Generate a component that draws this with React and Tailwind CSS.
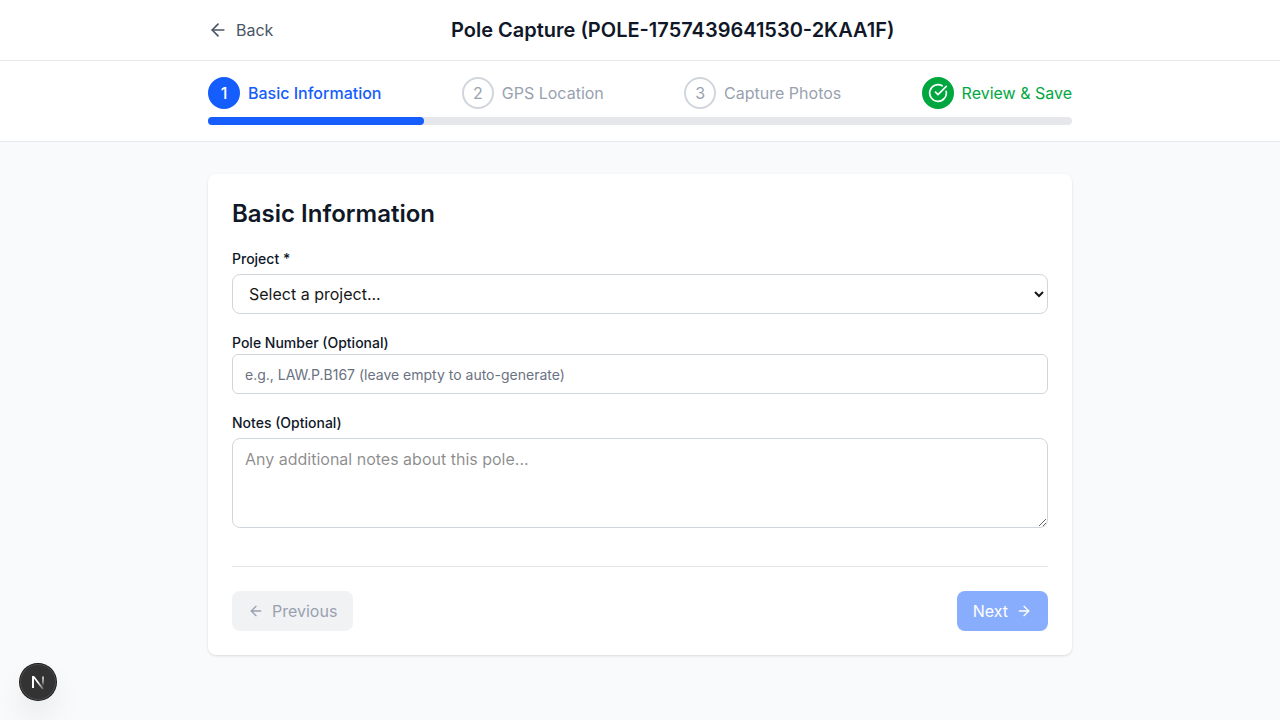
import { ArrowLeft, ArrowRight, CircleCheckBig } from "lucide-react";

const steps = [
  { label: "Basic Information", state: "current" },
  { label: "GPS Location", state: "upcoming" },
  { label: "Capture Photos", state: "upcoming" },
  { label: "Review & Save", state: "complete" },
];

const stepText = {
  current: "font-medium text-blue-600",
  upcoming: "text-gray-400",
  complete: "text-green-600",
};

const stepCircle = {
  current: "border-blue-600 bg-blue-600 text-white",
  upcoming: "border-gray-300 text-gray-400",
  complete: "border-green-600 bg-green-600 text-white",
};

function Header() {
  return (
    <header className="border-b border-gray-200 bg-white">
      <div className="mx-auto flex max-w-4xl items-center justify-between px-4 py-4">
        <button type="button" className="flex items-center gap-2 text-gray-600">
          <ArrowLeft size={20} aria-hidden="true" />
          Back
        </button>
        <h1 className="text-xl font-semibold">Pole Capture (POLE-1757439641530-2KAA1F)</h1>
        <div />
      </div>
    </header>
  );
}

function Progress() {
  return (
    <nav aria-label="Capture steps" className="border-b border-gray-200 bg-white">
      <div className="mx-auto max-w-4xl px-4 py-4">
        <ol className="mb-2 flex items-center justify-between">
          {steps.map((step, index) => (
            <li key={step.label} className={`flex items-center gap-2 ${stepText[step.state]}`}>
              <span
                className={`flex size-8 items-center justify-center rounded-full border-2 ${stepCircle[step.state]}`}
              >
                {step.state === "complete" ? <CircleCheckBig size={20} aria-hidden="true" /> : index + 1}
              </span>
              <span>{step.label}</span>
            </li>
          ))}
        </ol>
        <div className="h-2 w-full rounded bg-gray-200">
          <div className="h-2 w-1/4 rounded bg-blue-600" />
        </div>
      </div>
    </nav>
  );
}

function CaptureForm() {
  return (
    <form className="rounded-lg bg-white p-6 shadow-sm">
      <h2 className="mb-4 text-2xl font-semibold">Basic Information</h2>
      <div className="space-y-4">
        <div>
          <label htmlFor="project" className="text-sm font-medium">
            Project *
          </label>
          <select
            id="project"
            className="mt-1 block h-10 w-full rounded-lg border border-gray-300 bg-white px-3 text-neutral-900"
          >
            <option>Select a project...</option>
          </select>
        </div>
        <div>
          <label htmlFor="pole-number" className="text-sm font-medium">
            Pole Number (Optional)
          </label>
          <input
            id="pole-number"
            type="text"
            placeholder="e.g., LAW.P.B167 (leave empty to auto-generate)"
            className="block h-10 w-full rounded-md border border-gray-300 bg-white px-3 py-2 text-sm placeholder:text-gray-500"
          />
        </div>
        <div>
          <label htmlFor="notes" className="text-sm font-medium">
            Notes (Optional)
          </label>
          <textarea
            id="notes"
            rows={3}
            placeholder="Any additional notes about this pole..."
            className="mt-1 block w-full rounded-lg border border-gray-300 px-3 py-2 text-neutral-900"
          />
        </div>
      </div>
      <div className="mt-[38px] flex justify-between border-t border-gray-200 pt-6">
        <button
          type="button"
          disabled
          className="flex items-center gap-2 rounded-lg bg-[#f1f2f4] px-4 py-2 text-gray-400"
        >
          <ArrowLeft size={16} aria-hidden="true" />
          Previous
        </button>
        <button
          type="button"
          disabled
          className="flex items-center gap-2 rounded-lg bg-blue-600 px-4 py-2 text-white opacity-50"
        >
          Next
          <ArrowRight size={16} aria-hidden="true" />
        </button>
      </div>
    </form>
  );
}

function DevBadge() {
  return (
    <button
      type="button"
      aria-label="Open developer tools"
      className="fixed bottom-5 left-5 flex size-9 items-center justify-center rounded-full bg-[#333333] shadow-[0_0_0_1px_#171717,inset_0_0_0_1px_#4a4a4a,0_16px_32px_-8px_rgba(0,0,0,0.24)]"
    >
      <svg width="40" height="40" viewBox="0 0 40 40" fill="none" className="shrink-0" aria-hidden="true">
        <defs>
          <linearGradient id="stem" x1="26" y1="13" x2="26" y2="24" gradientUnits="userSpaceOnUse">
            <stop stopColor="white" />
            <stop offset="0.6" stopColor="white" stopOpacity="0.6" />
            <stop offset="1" stopColor="white" stopOpacity="0" />
          </linearGradient>
          <linearGradient id="slope" x1="20" y1="20" x2="26" y2="28" gradientUnits="userSpaceOnUse">
            <stop stopColor="white" />
            <stop offset="1" stopColor="white" stopOpacity="0.15" />
          </linearGradient>
        </defs>
        <path d="M25 14.5V24" stroke="url(#stem)" strokeWidth="1.6" />
        <path d="M15 26V14.8H15.7L25 27" stroke="url(#slope)" strokeWidth="1.8" />
        <path d="M15 26V14.5" stroke="white" strokeWidth="1.8" />
      </svg>
    </button>
  );
}

export default function App() {
  return (
    <div className="min-h-screen bg-gray-50 font-['Inter',sans-serif] text-gray-900">
      <Header />
      <Progress />
      <main className="mx-auto max-w-4xl px-4 py-8">
        <CaptureForm />
      </main>
      <DevBadge />
    </div>
  );
}
